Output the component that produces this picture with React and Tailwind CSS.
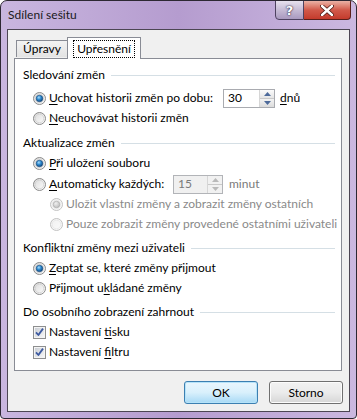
import React from "react";

const F = { fontFamily: 'Lato, "Noto Sans", "Liberation Sans", sans-serif' };

function Radio({ checked, disabled }) {
  const border = disabled ? "#c2c2c2" : "#8a8a8a";
  return (
    <svg width="13" height="13" viewBox="0 0 13 13" className="shrink-0">
      <defs>
        <linearGradient id={`rg${disabled ? "d" : "n"}`} x1="0" y1="0" x2="1" y2="1">
          <stop offset="0" stopColor={disabled ? "#f0f0f0" : "#d8d8d8"} />
          <stop offset="1" stopColor={disabled ? "#fbfbfb" : "#ffffff"} />
        </linearGradient>
        <radialGradient id="rdot" cx="0.4" cy="0.35" r="0.7">
          <stop offset="0" stopColor="#a8dcfb" />
          <stop offset="0.45" stopColor="#2f8bd0" />
          <stop offset="1" stopColor="#0b3e73" />
        </radialGradient>
        <radialGradient id="rdotd" cx="0.4" cy="0.35" r="0.7">
          <stop offset="0" stopColor="#f0f0f0" />
          <stop offset="1" stopColor="#b8b8b8" />
        </radialGradient>
      </defs>
      <circle cx="6.5" cy="6.5" r="6" fill={`url(#rg${disabled ? "d" : "n"})`} stroke={border} strokeWidth="1" />
      <circle cx="6.5" cy="6.5" r="4.3" fill="none" stroke={disabled ? "#e6e6e6" : "#cfcfcf"} strokeWidth="0.8" />
      {checked && (
        <circle cx="6.5" cy="6.5" r="3.3" fill={disabled ? "url(#rdotd)" : "url(#rdot)"} stroke={disabled ? "#a8a8a8" : "#1a4c7e"} strokeWidth="0.6" />
      )}
    </svg>
  );
}

function Check() {
  return (
    <svg width="13" height="13" viewBox="0 0 13 13" className="shrink-0">
      <defs>
        <linearGradient id="cbg" x1="0" y1="0" x2="1" y2="1">
          <stop offset="0" stopColor="#cbcfd5" />
          <stop offset="1" stopColor="#f6f6f6" />
        </linearGradient>
      </defs>
      <rect x="0.5" y="0.5" width="12" height="12" fill="#f4f4f4" stroke="#8e8f8f" />
      <rect x="2" y="2" width="9" height="9" fill="url(#cbg)" />
      <path d="M3 6.3 L5.4 9 L10 2.6" fill="none" stroke="#3d5aa0" strokeWidth="1.8" strokeLinejoin="round" />
    </svg>
  );
}

function U({ children }) {
  return <span className="underline underline-offset-[2px] decoration-1">{children}</span>;
}

function SectionHeader({ children, className = "" }) {
  return (
    <div className={`flex items-center h-[20px] pl-[8px] pr-[6px] ${className}`}>
      <span className="whitespace-nowrap">{children}</span>
      <div className="flex-1 h-px bg-[#d5dfe5] ml-[6px] mt-px" />
    </div>
  );
}

function Row({ children, indent = 18, className = "", disabled }) {
  return (
    <div
      className={`flex items-center h-[20px] whitespace-nowrap ${disabled ? "text-[#8a8a8a]" : ""} ${className}`}
      style={{ paddingLeft: indent }}
    >
      {children}
    </div>
  );
}

function SpinArrows({ disabled }) {
  const c = disabled ? "#b9b9b9" : "#4d6a9a";
  return (
    <div className="flex flex-col w-[15px] h-full border-l border-[#d6d6d6]">
      <div className={`flex-1 flex items-center justify-center border-b border-[#c9c9c9] ${disabled ? "bg-[#f1f1f1]" : "bg-gradient-to-b from-[#fbfbfb] to-[#e5e5e5]"}`}>
        <svg width="7" height="4" viewBox="0 0 7 4"><path d="M0 4 L3.5 0 L7 4 Z" fill={c} /></svg>
      </div>
      <div className={`flex-1 flex items-center justify-center ${disabled ? "bg-[#f1f1f1]" : "bg-gradient-to-b from-[#f3f3f3] to-[#dcdcdc]"}`}>
        <svg width="7" height="4" viewBox="0 0 7 4"><path d="M0 0 L7 0 L3.5 4 Z" fill={c} /></svg>
      </div>
    </div>
  );
}

export default function App() {
  return (
    <div
      style={F}
      className="relative w-[357px] h-[419px] overflow-hidden rounded-t-[7px] rounded-b-[4px] border border-[#2d2833] text-[12px] leading-none text-black bg-gradient-to-r from-[#c9b6df] via-[#b59ccf] to-[#cbb8e0]"
    >
      {/* title bar */}
      <div className="h-[28px] flex items-center pl-[7px] text-[12px] text-[#1a1a1a]">
        Sdílení sešitu
      </div>

      {/* caption buttons */}
      <div className="absolute top-[-1px] right-[5px] flex">
        <div className="w-[29px] h-[20px] rounded-bl-[4px] border border-[#4e4260] bg-gradient-to-b from-[#e7e1ee] via-[#c6bbd5] to-[#a999bf] flex items-center justify-center">
          <span className="text-white font-bold text-[13px] [text-shadow:0_0_2px_#2b2040,0_0_1px_#2b2040]" style={{ fontFamily: '"DejaVu Sans", sans-serif' }}>?</span>
        </div>
        <div className="w-[47px] h-[20px] rounded-br-[4px] border border-l-0 border-[#5a1f1a] bg-gradient-to-b from-[#eab2a6] via-[#d1594a] to-[#c43a2c] flex items-center justify-center">
          <svg width="14" height="11" viewBox="0 0 14 11">
            <path d="M2 1 L12 10 M12 1 L2 10" stroke="#4a1812" strokeWidth="4" strokeLinecap="round" />
            <path d="M2 1 L12 10 M12 1 L2 10" stroke="#ffffff" strokeWidth="2.4" strokeLinecap="round" />
          </svg>
        </div>
      </div>

      {/* client area */}
      <div className="mx-[6px] h-[383px] border border-[#4c4653] bg-[#f0f0f0] flex flex-col pt-[7px] px-[6px]">
        {/* tabs */}
        <div className="flex items-end h-[21px] pl-[2px] relative z-10">
          <div className="h-[17px] w-[51px] mb-px border border-r-0 border-b-0 border-[#898c95] bg-gradient-to-b from-[#f3f3f3] to-[#e3e3e3] flex items-center justify-center text-[12px]">
            Úpravy
          </div>
          <div className="h-[22px] w-[74px] border border-b-0 border-[#898c95] bg-white flex items-center justify-center -mb-px">
            <span className="outline outline-1 outline-dotted outline-black px-[3px] py-[2px] leading-none">Upřesnění</span>
          </div>
        </div>
        <div className="w-[328px] h-[313px] border border-[#898c95] bg-white flex flex-col pt-[6px]">
          <SectionHeader>Sledování změn</SectionHeader>
          <Row className="mt-[2px] h-[22px]">
            <Radio checked />
            <span className="ml-[3px] w-[174px] shrink-0"><U>U</U>chovat historii změn po dobu:</span>
            <div className="w-[52px] h-[19px] shrink-0 border border-[#a9abb0] bg-white flex items-stretch">
              <span className="flex-1 flex items-center pl-[4px]">30</span>
              <SpinArrows />
            </div>
            <span className="ml-[5px]"><U>d</U>nů</span>
          </Row>
          <Row className="mt-[-1px]">
            <Radio />
            <span className="ml-[3px]"><U>N</U>euchovávat historii změn</span>
          </Row>

          <SectionHeader className="mt-[5px]">Aktualizace změn</SectionHeader>
          <Row>
            <Radio checked />
            <span className="ml-[3px]"><U>P</U>ři uložení souboru</span>
          </Row>
          <Row className="mt-px">
            <Radio />
            <span className="ml-[3px] w-[124px] shrink-0"><U>A</U>utomaticky každých:</span>
            <div className="w-[50px] h-[19px] shrink-0 border border-[#b2b4b8] bg-[#f0f0f0] flex items-stretch text-[#7a7a7a]">
              <span className="flex-1 flex items-center pl-[4px]">15</span>
              <SpinArrows disabled />
            </div>
            <span className="ml-[6px] text-[#7a7a7a]">minut</span>
          </Row>
          <Row indent={35} disabled>
            <Radio checked disabled />
            <span className="ml-[3px]">Uložit vlastní změny a zobrazit změny ostatních</span>
          </Row>
          <Row indent={35} disabled>
            <Radio disabled />
            <span className="ml-[3px]">Pouze zobrazit změny provedené ostatními uživateli</span>
          </Row>

          <SectionHeader className="mt-[4px]">Konfliktní změny mezi uživateli</SectionHeader>
          <Row>
            <Radio checked />
            <span className="ml-[3px]"><U>Z</U>eptat se, které změny přijmout</span>
          </Row>
          <Row>
            <Radio />
            <span className="ml-[3px]">Přijmout u<U>k</U>ládané změny</span>
          </Row>

          <SectionHeader className="mt-[4px]">Do osobního zobrazení zahrnout</SectionHeader>
          <Row className="h-[19px]">
            <Check />
            <span className="ml-[3px]">Nastavení <U>t</U>isku</span>
          </Row>
          <Row>
            <Check />
            <span className="ml-[3px]">Nastavení <U>f</U>iltru</span>
          </Row>
        </div>

        {/* buttons */}
        <div className="flex justify-end gap-[11px] mt-[10px]">
          <div className="w-[74px] h-[23px] rounded-[3px] border border-[#3c7fb1] bg-gradient-to-b from-[#eaf6fd] via-[#d9f0fc] to-[#a7d9f5] flex items-center justify-center shadow-[inset_0_0_0_1px_#b6e3f9]">
            OK
          </div>
          <div className="w-[74px] h-[23px] rounded-[3px] border border-[#707070] bg-gradient-to-b from-[#f2f2f2] via-[#ebebeb] to-[#d6d6d6] flex items-center justify-center shadow-[inset_0_0_0_1px_#fcfcfc]">
            Storno
          </div>
        </div>
      </div>
    </div>
  );
}
